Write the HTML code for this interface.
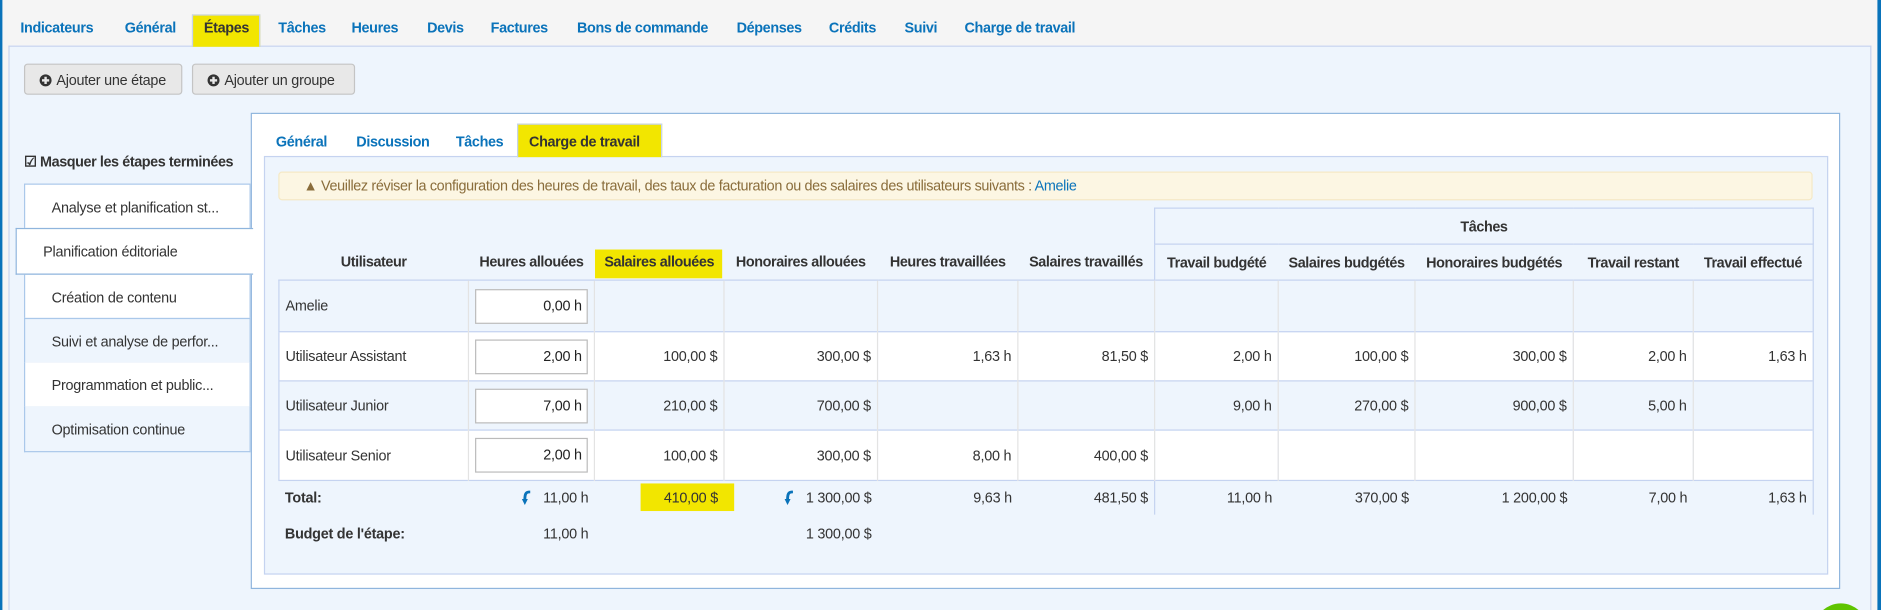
<!DOCTYPE html>
<html><head><meta charset="utf-8"><style>
*{box-sizing:border-box;margin:0;padding:0}
html,body{width:1881px;height:610px;overflow:hidden;background:#f5f5f5}
#w{position:relative;width:1881px;height:610px;overflow:hidden}
#s{position:absolute;left:0;top:0;width:1568px;height:508.5px;overflow:hidden;transform:scale(1.19962);transform-origin:0 0;font-family:"Liberation Sans",sans-serif;font-size:12px;letter-spacing:-0.2px;color:#333}
.a{position:absolute;white-space:nowrap}
.tab{position:absolute;top:16px;font-weight:bold;color:#0a73ba;font-size:12px;letter-spacing:-0.3px}
.hl{background:#f2e600}
.btn{position:absolute;top:53px;height:26px;background:#e8e8e8;border:1px solid #c4c4c4;border-radius:3px;padding:6px 0 0 12px;font-size:12px;color:#333}
.pl{display:inline-block;width:10px;height:10px;border-radius:50%;background:#333;margin-right:4px;vertical-align:-1px;position:relative}
.pl:before{content:"";position:absolute;left:2px;top:4px;width:6px;height:2px;background:#e8e8e8}
.pl:after{content:"";position:absolute;left:4px;top:2px;width:2px;height:6px;background:#e8e8e8}
.li{position:absolute;left:20px;width:189px;height:38px;border:1px solid #aac8ea;border-top:none;padding:12px 0 0 22px;font-size:12px}
table{position:absolute;left:232px;top:173px;border-collapse:collapse;table-layout:fixed;width:1279px}
td{font-size:12px;padding:0 5px;text-align:right;white-space:nowrap;overflow:hidden}
.h td{font-weight:bold;text-align:center;height:30px;color:#333;letter-spacing:-0.35px;padding:0 2px}
.d td{border-top:1px solid #c5d3f0;border-left:1px solid #e3e3e3}
.d td:first-child{border-left:1px solid #c5d3f0;text-align:left}
.d td:last-child{border-right:1px solid #c5d3f0}
.lt td{background:#eef5fd}.wt td{background:#fff}
.inp{display:inline-block;width:94px;height:29px;border:1px solid #bbb;background:#fff;text-align:right;padding:6px 4px 0 0;color:#222;float:left}
.arr{display:inline-block;vertical-align:-3px;margin-right:10px}
</style></head><body><div id="w"><div id="s">
<div class="a" style="left:0;top:0;width:2px;height:509px;background:#0a73ba"></div>
<div class="a" style="left:1565px;top:0;width:3px;height:509px;background:#0a73ba"></div>
<div class="a" style="left:7px;top:38px;width:1553px;height:480px;background:#eef5fd;border:1px solid #c8d4f0;border-bottom:none"></div>
<div class="a hl" style="left:160px;top:12px;width:57px;height:27px;border:1px solid #c8d4f0;border-bottom:none"></div>
<span class="tab" style="left:17px">Indicateurs</span><span class="tab" style="left:104px">Général</span><span class="tab" style="left:170px;color:#333">Étapes</span><span class="tab" style="left:232px">Tâches</span><span class="tab" style="left:293px">Heures</span><span class="tab" style="left:356px">Devis</span><span class="tab" style="left:409px">Factures</span><span class="tab" style="left:481px">Bons de commande</span><span class="tab" style="left:614px">Dépenses</span><span class="tab" style="left:691px">Crédits</span><span class="tab" style="left:754px">Suivi</span><span class="tab" style="left:804px">Charge de travail</span>
<div class="btn" style="left:20px;width:132px"><span class="pl"></span>Ajouter une étape</div>
<div class="btn" style="left:160px;width:136px"><span class="pl"></span>Ajouter un groupe</div>
<div class="a" style="left:20px;top:128px;font-weight:bold;font-size:12px;letter-spacing:-0.35px">☑ Masquer les étapes terminées</div>
<div class="li" style="top:153px;background:#fff;border-top:1px solid #aac8ea;height:38px">Analyse et planification st...</div>
<div class="li" style="top:228px;background:#fff;border-top:1px solid #aac8ea">Création de contenu</div>
<div class="li" style="top:265px;background:#eef5fd;border-top:1px solid #aac8ea">Suivi et analyse de perfor...</div>
<div class="li" style="top:302px;background:#fff">Programmation et public...</div>
<div class="li" style="top:339px;background:#eef5fd">Optimisation continue</div>
<div class="a" style="left:209px;top:94px;width:1325px;height:397px;background:#fff;border:1px solid #8fb5dd"></div>
<div class="a" style="left:13px;top:190px;width:198px;height:39px;background:#fff;border:1px solid #8fb5dd;border-right:none;padding:12px 0 0 22px">Planification éditoriale</div>
<div class="a" style="left:220px;top:130px;width:1304px;height:349px;background:#eef5fd;border:1px solid #c5d3f0"></div>
<div class="a hl" style="left:431px;top:103px;width:121px;height:28px;border:1px solid #c5d3f0;border-bottom:none"></div>
<span class="tab" style="left:230px;top:111px">Général</span><span class="tab" style="left:297px;top:111px">Discussion</span><span class="tab" style="left:380px;top:111px">Tâches</span><span class="tab" style="left:441px;top:111px;color:#333">Charge de travail</span>
<div class="a" style="left:232px;top:143px;width:1279px;height:24px;background:#fcf6e3;border:1px solid #f5e9c6;border-radius:3px;color:#8a6d3b;font-size:12px;letter-spacing:-0.3px;padding:4px 0 0 20px">▲ Veuillez réviser la configuration des heures de travail, des taux de facturation ou des salaires des utilisateurs suivants : <span style="color:#0a73ba">Amelie</span></div>
<div class="a hl" style="left:496px;top:208px;width:106px;height:24px"></div>
<div class="a hl" style="left:534px;top:403px;width:78px;height:23px"></div>
<table>
<colgroup><col style="width:158px"><col style="width:105px"><col style="width:108px"><col style="width:128px"><col style="width:117px"><col style="width:114px"><col style="width:103px"><col style="width:114px"><col style="width:132px"><col style="width:100px"><col style="width:100px"></colgroup>
<tr class="h"><td colspan="6"></td><td colspan="5" style="border:1px solid #c5d3f0">Tâches</td></tr>
<tr class="h"><td>Utilisateur</td><td>Heures allouées</td><td>Salaires allouées</td><td>Honoraires allouées</td><td>Heures travaillées</td><td>Salaires travaillés</td><td style="border-left:1px solid #c5d3f0">Travail budgété</td><td>Salaires budgétés</td><td>Honoraires budgétés</td><td>Travail restant</td><td style="border-right:1px solid #c5d3f0">Travail effectué</td></tr>
<tr class="d lt" style="height:43px"><td>Amelie</td><td><span class="inp">0,00 h</span></td><td></td><td></td><td></td><td></td><td></td><td></td><td></td><td></td><td></td></tr>
<tr class="d wt" style="height:41px"><td>Utilisateur Assistant</td><td><span class="inp">2,00 h</span></td><td>100,00 $</td><td>300,00 $</td><td>1,63 h</td><td>81,50 $</td><td>2,00 h</td><td>100,00 $</td><td>300,00 $</td><td>2,00 h</td><td>1,63 h</td></tr>
<tr class="d lt" style="height:41px"><td>Utilisateur Junior</td><td><span class="inp">7,00 h</span></td><td>210,00 $</td><td>700,00 $</td><td></td><td></td><td>9,00 h</td><td>270,00 $</td><td>900,00 $</td><td>5,00 h</td><td></td></tr>
<tr class="d wt" style="height:42px;border-bottom:1px solid #c5d3f0"><td>Utilisateur Senior</td><td><span class="inp">2,00 h</span></td><td>100,00 $</td><td>300,00 $</td><td>8,00 h</td><td>400,00 $</td><td></td><td></td><td></td><td></td><td></td></tr>
<tr style="height:28px"><td style="text-align:left;font-weight:bold">Total:</td><td><svg class="arr" width="8" height="13" viewBox="0 0 8 13"><path d="M7 1 C3 1 2.5 3 2.5 8" stroke="#0a73ba" stroke-width="2.4" fill="none"/><path d="M0 7 L5 7 L2.5 12 Z" fill="#0a73ba"/></svg>11,00 h</td><td>410,00 $</td><td><svg class="arr" width="8" height="13" viewBox="0 0 8 13"><path d="M7 1 C3 1 2.5 3 2.5 8" stroke="#0a73ba" stroke-width="2.4" fill="none"/><path d="M0 7 L5 7 L2.5 12 Z" fill="#0a73ba"/></svg>1 300,00 $</td><td>9,63 h</td><td>481,50 $</td><td style="border-left:1px solid #c5d3f0">11,00 h</td><td>370,00 $</td><td>1 200,00 $</td><td>7,00 h</td><td style="border-right:1px solid #c5d3f0">1,63 h</td></tr>
<tr style="height:32px"><td style="text-align:left;font-weight:bold">Budget de l'étape:</td><td>11,00 h</td><td></td><td>1 300,00 $</td><td colspan="7"></td></tr>
</table>
<div class="a" style="left:1512px;top:503px;width:45px;height:45px;border-radius:50%;background:#5fc400"></div>
</div></div></body></html>
